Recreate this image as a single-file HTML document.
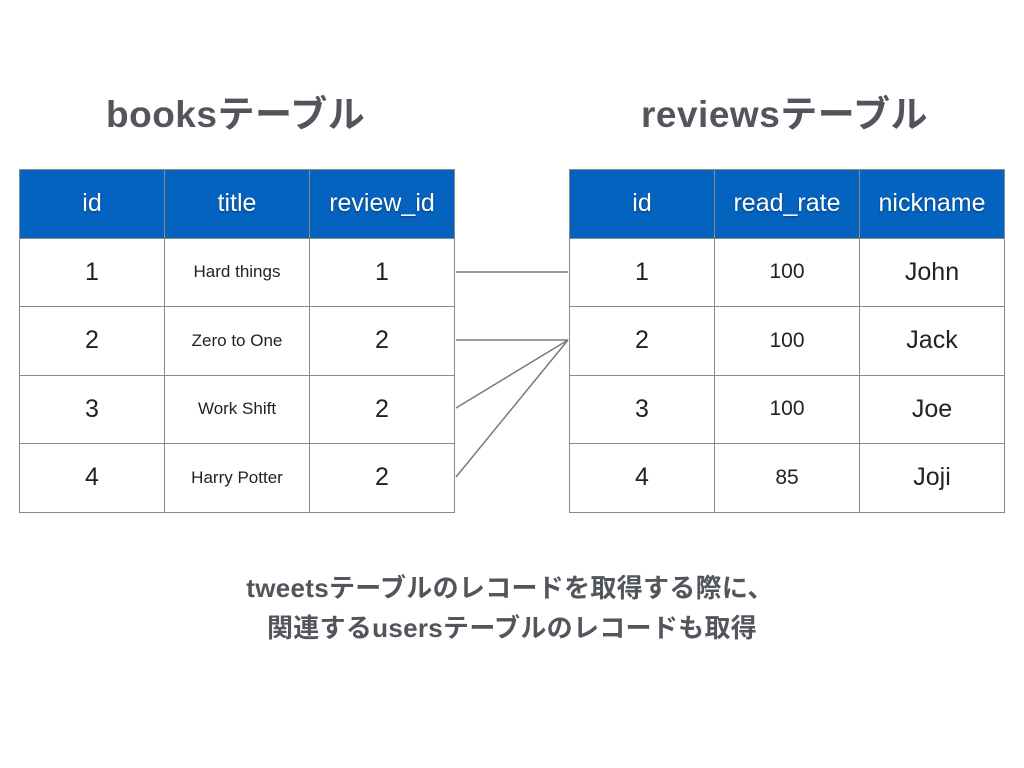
<!DOCTYPE html>
<html><head><meta charset="utf-8"><style>
body{margin:0;width:1024px;height:768px;background:#fff;position:relative;overflow:hidden;font-family:"Liberation Sans","Noto Sans CJK JP",sans-serif}
.t{position:absolute;font-weight:bold;color:#52565c;font-size:37px;line-height:40px;white-space:nowrap;letter-spacing:0.5px}
table{position:absolute;border-collapse:collapse;table-layout:fixed}
td{border:1px solid #8a8a8a;width:144px;height:67.5px;padding:0;text-align:center;color:#222;font-size:25px}
tr.h td{background:#0563c0;color:#fff;font-size:25px;text-shadow:0 1px 2px rgba(0,0,0,.4)}
td.s{font-size:17px}
.b{position:absolute;left:0;width:1024px;text-align:center;font-weight:bold;color:#52565c;font-size:26px;line-height:30px;letter-spacing:0.3px}
</style></head><body>
<div class="t" style="left:106px;top:95px">booksテーブル</div>
<div class="t" style="left:641px;top:95px">reviewsテーブル</div>
<table style="left:19px;top:169px">
<tr class="h"><td>id</td><td>title</td><td>review_id</td></tr>
<tr><td>1</td><td class="s">Hard things</td><td>1</td></tr>
<tr><td>2</td><td class="s">Zero to One</td><td>2</td></tr>
<tr><td>3</td><td class="s">Work Shift</td><td>2</td></tr>
<tr><td>4</td><td class="s">Harry Potter</td><td>2</td></tr>
</table>
<table style="left:569px;top:169px">
<tr class="h"><td>id</td><td>read_rate</td><td>nickname</td></tr>
<tr><td>1</td><td style="font-size:21px">100</td><td>John</td></tr>
<tr><td>2</td><td style="font-size:21px">100</td><td>Jack</td></tr>
<tr><td>3</td><td style="font-size:21px">100</td><td>Joe</td></tr>
<tr><td>4</td><td style="font-size:21px">85</td><td>Joji</td></tr>
</table>
<svg style="position:absolute;left:0;top:0" width="1024" height="768">
<g stroke="#7a7a7a" stroke-width="1.5">
<line x1="456" y1="272" x2="568" y2="272"/>
<line x1="456" y1="340" x2="568" y2="340"/>
<line x1="456" y1="408" x2="568" y2="340"/>
<line x1="456" y1="477" x2="568" y2="340"/>
</g></svg>
<div class="b" style="top:573px;left:-2px">tweetsテーブルのレコードを取得する際に、</div>
<div class="b" style="top:613px">関連するusersテーブルのレコードも取得</div>
</body></html>
